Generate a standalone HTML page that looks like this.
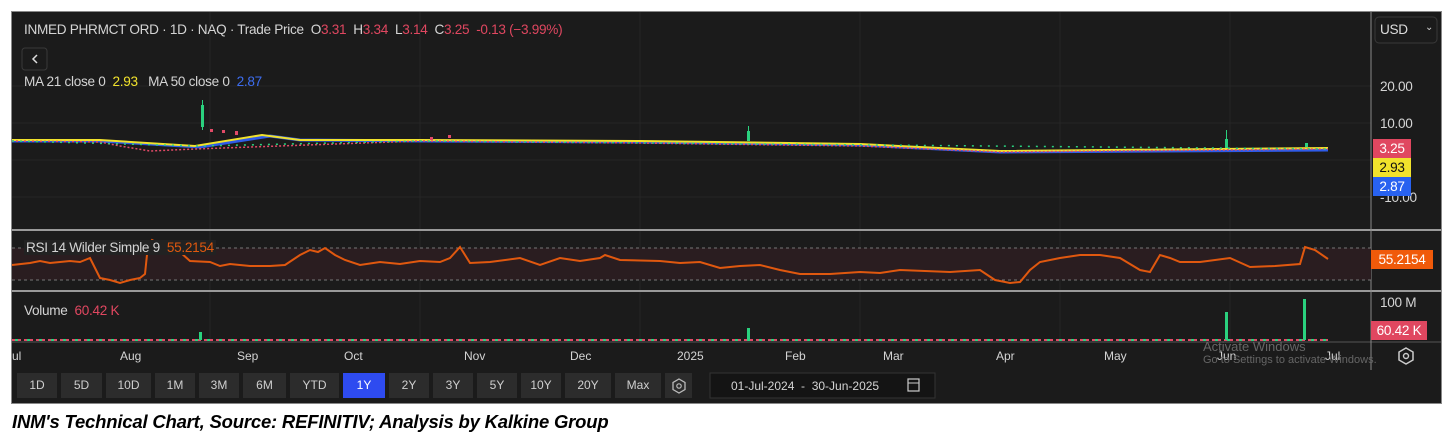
<!DOCTYPE html>
<html><head><meta charset="utf-8"><style>
body{margin:0;width:1454px;height:448px;background:#fff;position:relative;overflow:hidden;font-family:"Liberation Sans",sans-serif}
#c{position:absolute;left:11px;top:11px;width:1431px;height:393px;background:#1b1b1b;border:1px solid #888;box-sizing:border-box}
.t{position:absolute;font-size:12px;color:#d4d4d4;white-space:nowrap}
.l{font-size:13.6px;letter-spacing:-0.3px}
.btn{position:absolute;top:373px;height:25px;background:#2c2c2c;color:#cfcfcf;font-size:12px;line-height:25px;text-align:center}
.cap{position:absolute;left:12px;top:411px;font-size:18.5px;font-weight:bold;font-style:italic;color:#000;font-family:"Liberation Sans",sans-serif;letter-spacing:-0.2px}
</style></head><body>
<div id="c"></div>
<svg width="1454" height="448" style="position:absolute;left:0;top:0">
<g stroke="#262626" stroke-width="1">
<line x1="12" y1="86" x2="1371" y2="86"/><line x1="12" y1="123" x2="1371" y2="123"/><line x1="12" y1="160" x2="1371" y2="160"/><line x1="12" y1="197" x2="1371" y2="197"/>
<line x1="210" y1="12" x2="210" y2="342"/><line x1="420" y1="12" x2="420" y2="342"/><line x1="640" y1="12" x2="640" y2="342"/><line x1="860" y1="12" x2="860" y2="342"/><line x1="1060" y1="12" x2="1060" y2="342"/><line x1="1230" y1="12" x2="1230" y2="342"/>
</g>
<line x1="12" y1="230" x2="1441" y2="230" stroke="#9a9a9a" stroke-width="2"/>
<line x1="12" y1="291" x2="1441" y2="291" stroke="#9a9a9a" stroke-width="2"/>
<line x1="12" y1="342" x2="1441" y2="342" stroke="#555" stroke-width="1"/>
<line x1="1371" y1="12" x2="1371" y2="370" stroke="#8a8a8a" stroke-width="1"/>
<polyline points="12,141 100,141 200,147 270,136 300,140 420,141 640,142 860,145 1000,152 1328,150" fill="none" stroke="#2e5be8" stroke-width="3"/>
<polyline points="12,140 100,140 195,146 262,135 300,140 420,140 640,141 860,144 1000,151 1328,148" fill="none" stroke="#f1e22c" stroke-width="2"/>
<polyline points="12,141 100,142 120,146 150,151 195,149 420,141 640,143 860,146 1000,152 1328,149" fill="none" stroke="#e24a67" stroke-width="1.5" stroke-dasharray="2,2"/>
<polyline points="12,141 200,146 420,141 1328,149" fill="none" stroke="#2ad17e" stroke-width="1.5" stroke-dasharray="2,6"/>
<rect x="201" y="105" width="3" height="22" fill="#2ad17e"/><line x1="202.5" y1="100" x2="202.5" y2="130" stroke="#2ad17e"/>
<rect x="747" y="131" width="3" height="10" fill="#2ad17e"/><line x1="748.5" y1="126" x2="748.5" y2="141" stroke="#2ad17e"/>
<rect x="1225" y="139" width="3" height="9" fill="#2ad17e"/><line x1="1226.5" y1="130" x2="1226.5" y2="148" stroke="#2ad17e"/>
<rect x="1305" y="143" width="3" height="4" fill="#2ad17e"/>
<g fill="#e24a67"><rect x="210" y="129" width="3" height="3"/><rect x="222" y="130" width="3" height="3"/><rect x="235" y="131" width="3" height="4"/><rect x="430" y="137" width="3" height="3"/><rect x="448" y="135" width="3" height="3"/></g>
<rect x="12" y="248" width="1359" height="32" fill="#2a1d20"/>
<line x1="12" y1="248" x2="1371" y2="248" stroke="#777" stroke-dasharray="3,3"/>
<line x1="12" y1="280" x2="1371" y2="280" stroke="#777" stroke-dasharray="3,3"/>
<polyline points="12,265 30,263 40,261 50,263 70,261 80,262 90,258 95,268 100,278 110,280 120,283 130,280 140,278 145,274 148,245 152,240 165,247 180,252 190,261 210,262 220,266 230,264 250,266 270,266 285,265 300,255 310,250 318,252 325,248 335,255 345,260 360,265 380,262 400,264 420,261 440,262 450,258 460,247 470,263 490,262 520,258 540,265 560,258 580,261 600,258 605,255 620,260 660,261 680,263 700,262 720,268 740,266 760,265 780,270 800,274 830,274 860,272 880,273 900,270 950,272 980,270 995,280 1010,283 1020,282 1030,270 1040,262 1060,258 1080,255 1100,255 1120,258 1140,270 1150,272 1160,255 1170,258 1180,262 1200,262 1230,258 1250,267 1275,266 1300,264 1305,247 1315,250 1328,259" fill="none" stroke="#e0580f" stroke-width="2"/>
<line x1="12" y1="340" x2="1328" y2="340" stroke="#e24a67" stroke-width="2" stroke-dasharray="3,3"/>
<line x1="15" y1="340" x2="1328" y2="340" stroke="#2ad17e" stroke-width="2" stroke-dasharray="3,9"/>
<rect x="199" y="332" width="3" height="8" fill="#2ad17e"/>
<rect x="747" y="328" width="3" height="12" fill="#2ad17e"/>
<rect x="1225" y="312" width="3" height="28" fill="#2ad17e"/>
<rect x="1303" y="299" width="3" height="41" fill="#2ad17e"/>
<rect x="710" y="373" width="225" height="25" fill="#141414" stroke="#333"/>
<rect x="908" y="379" width="11" height="12" fill="none" stroke="#ccc" stroke-width="1.2"/><line x1="908" y1="383" x2="919" y2="383" stroke="#ccc"/>
<rect x="665" y="373" width="27" height="25" fill="#2c2c2c"/>
<polygon points="679,379 685,382.5 685,389.5 679,393 673,389.5 673,382.5" fill="none" stroke="#bbb" stroke-width="1.3"/><circle cx="679" cy="386" r="2.2" fill="none" stroke="#bbb" stroke-width="1.2"/>
<polygon points="1406,348 1413,352 1413,360 1406,364 1399,360 1399,352" fill="none" stroke="#ccc" stroke-width="1.5"/><circle cx="1406" cy="356" r="2.5" fill="none" stroke="#ccc" stroke-width="1.4"/>
<rect x="1375" y="17" width="62" height="26" rx="4" fill="none" stroke="#3a3a3a"/>
<rect x="22" y="48" width="25" height="22" rx="3" fill="none" stroke="#3a3a3a"/>
<polyline points="37,55 33,59 37,63" fill="none" stroke="#ddd" stroke-width="1.5"/>
</svg>
<div class="t l" style="left:24px;top:22px">INMED PHRMCT ORD · 1D · NAQ · Trade Price&nbsp; O<span style="color:#e04760">3.31</span>&nbsp; H<span style="color:#e04760">3.34</span>&nbsp; L<span style="color:#e04760">3.14</span>&nbsp; C<span style="color:#e04760">3.25</span>&nbsp; <span style="color:#e04760">-0.13 (−3.99%)</span></div>
<div class="t l" style="left:24px;top:74px">MA 21 close 0&nbsp; <span style="color:#f1e22c">2.93</span>&nbsp;&nbsp; MA 50 close 0&nbsp; <span style="color:#3d6df0">2.87</span></div>
<div class="t l" style="left:1380px;top:22px;color:#ddd">USD</div><div class="t" style="left:1425px;top:22px;font-size:10px">⌄</div>
<div class="t l" style="left:1380px;top:79px">20.00</div>
<div class="t l" style="left:1380px;top:116px">10.00</div>
<div class="t l" style="left:1380px;top:190px">-10.00</div>
<div class="t l" style="left:1373px;top:139px;width:38px;height:19px;background:#e04760;color:#fff;line-height:19px;text-align:center">3.25</div>
<div class="t l" style="left:1373px;top:158px;width:38px;height:19px;background:#f1e22c;color:#111;line-height:19px;text-align:center">2.93</div>
<div class="t l" style="left:1373px;top:177px;width:38px;height:19px;background:#2862f0;color:#fff;line-height:19px;text-align:center">2.87</div>
<div class="t l" style="left:24px;top:240px;background:#222;padding:0 2px">RSI 14 Wilder Simple 9&nbsp; <span style="color:#e0580f">55.2154</span></div>
<div class="t l" style="left:1371px;top:250px;width:62px;height:19px;background:#f05a0a;color:#fff;line-height:19px;text-align:center">55.2154</div>
<div class="t l" style="left:24px;top:303px">Volume&nbsp; <span style="color:#e04760">60.42 K</span></div>
<div class="t l" style="left:1380px;top:295px">100 M</div>
<div class="t l" style="left:1371px;top:321px;width:56px;height:19px;background:#e04760;color:#fff;line-height:19px;text-align:center">60.42 K</div>
<div class="t" style="left:12px;top:349px">ul</div><div class="t" style="left:120px;top:349px">Aug</div><div class="t" style="left:237px;top:349px">Sep</div><div class="t" style="left:344px;top:349px">Oct</div><div class="t" style="left:464px;top:349px">Nov</div><div class="t" style="left:570px;top:349px">Dec</div><div class="t" style="left:677px;top:349px">2025</div><div class="t" style="left:785px;top:349px">Feb</div><div class="t" style="left:883px;top:349px">Mar</div><div class="t" style="left:996px;top:349px">Apr</div><div class="t" style="left:1104px;top:349px">May</div><div class="t" style="left:1217px;top:349px">Jun</div><div class="t" style="left:1325px;top:349px">Jul</div>
<div class="t" style="left:1203px;top:339px;color:#666;font-size:13px">Activate Windows</div>
<div class="t" style="left:1203px;top:354px;color:#666;font-size:11px">Go to Settings to activate Windows.</div>
<div class="btn" style="left:17px;width:40px">1D</div><div class="btn" style="left:61px;width:41px">5D</div><div class="btn" style="left:106px;width:45px">10D</div><div class="btn" style="left:155px;width:40px">1M</div><div class="btn" style="left:199px;width:40px">3M</div><div class="btn" style="left:243px;width:43px">6M</div><div class="btn" style="left:290px;width:49px">YTD</div><div class="btn" style="left:343px;width:42px;background:#2e4bf0;color:#fff">1Y</div><div class="btn" style="left:389px;width:40px">2Y</div><div class="btn" style="left:433px;width:40px">3Y</div><div class="btn" style="left:477px;width:40px">5Y</div><div class="btn" style="left:521px;width:40px">10Y</div><div class="btn" style="left:565px;width:46px">20Y</div><div class="btn" style="left:615px;width:46px">Max</div>
<div class="t" style="left:731px;top:379px">01-Jul-2024&nbsp; -&nbsp; 30-Jun-2025</div>
<div class="cap">INM's Technical Chart, Source: REFINITIV; Analysis by Kalkine Group</div>
</body></html>
